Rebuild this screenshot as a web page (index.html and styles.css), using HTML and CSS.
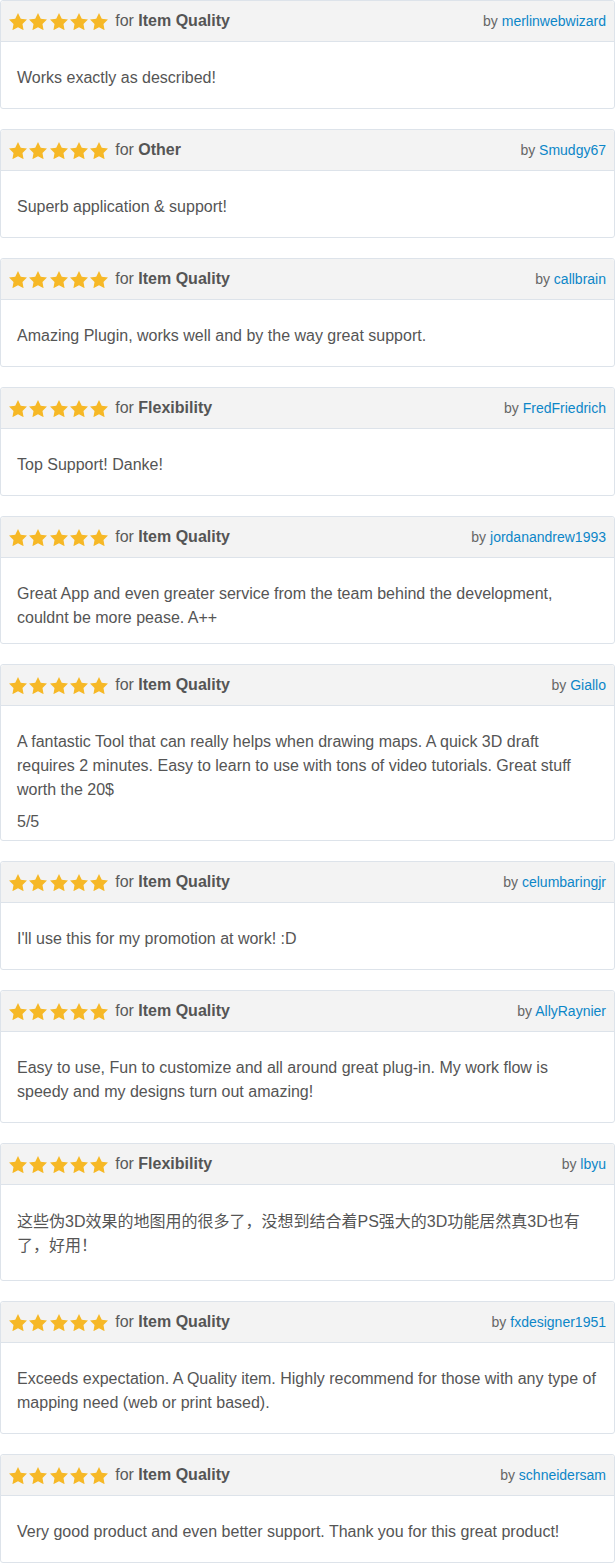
FILE: index.html
```html
<!DOCTYPE html>
<html lang="en">
<head>
<meta charset="utf-8">
<title>Reviews</title>
<link rel="stylesheet" href="styles.css">
</head>
<body>
<svg width="0" height="0" class="defs" aria-hidden="true">
  <defs>
    <symbol id="star" viewBox="1.6 1.6 20.8 19.9">
      <path d="M12 1.6l3.2 6.6 7.2 1-5.2 5.1 1.25 7.2L12 18.1l-6.45 3.4 1.25-7.2L1.6 9.2l7.2-1z"/>
    </symbol>
  </defs>
</svg>

<div class="reviews">

  <div class="review">
    <div class="review-head">
      <div class="rating">
        <span class="stars"><svg class="star"><use href="#star"/></svg><svg class="star"><use href="#star"/></svg><svg class="star"><use href="#star"/></svg><svg class="star"><use href="#star"/></svg><svg class="star"><use href="#star"/></svg></span>
        <span class="for">for <b>Item Quality</b></span>
      </div>
      <div class="author">by <a href="#">merlinwebwizard</a></div>
    </div>
    <div class="review-body"><p>Works exactly as described!</p></div>
  </div>

  <div class="review">
    <div class="review-head">
      <div class="rating">
        <span class="stars"><svg class="star"><use href="#star"/></svg><svg class="star"><use href="#star"/></svg><svg class="star"><use href="#star"/></svg><svg class="star"><use href="#star"/></svg><svg class="star"><use href="#star"/></svg></span>
        <span class="for">for <b>Other</b></span>
      </div>
      <div class="author">by <a href="#">Smudgy67</a></div>
    </div>
    <div class="review-body"><p>Superb application &amp; support!</p></div>
  </div>

  <div class="review">
    <div class="review-head">
      <div class="rating">
        <span class="stars"><svg class="star"><use href="#star"/></svg><svg class="star"><use href="#star"/></svg><svg class="star"><use href="#star"/></svg><svg class="star"><use href="#star"/></svg><svg class="star"><use href="#star"/></svg></span>
        <span class="for">for <b>Item Quality</b></span>
      </div>
      <div class="author">by <a href="#">callbrain</a></div>
    </div>
    <div class="review-body"><p>Amazing Plugin, works well and by the way great support.</p></div>
  </div>

  <div class="review">
    <div class="review-head">
      <div class="rating">
        <span class="stars"><svg class="star"><use href="#star"/></svg><svg class="star"><use href="#star"/></svg><svg class="star"><use href="#star"/></svg><svg class="star"><use href="#star"/></svg><svg class="star"><use href="#star"/></svg></span>
        <span class="for">for <b>Flexibility</b></span>
      </div>
      <div class="author">by <a href="#">FredFriedrich</a></div>
    </div>
    <div class="review-body"><p>Top Support! Danke!</p></div>
  </div>

  <div class="review">
    <div class="review-head">
      <div class="rating">
        <span class="stars"><svg class="star"><use href="#star"/></svg><svg class="star"><use href="#star"/></svg><svg class="star"><use href="#star"/></svg><svg class="star"><use href="#star"/></svg><svg class="star"><use href="#star"/></svg></span>
        <span class="for">for <b>Item Quality</b></span>
      </div>
      <div class="author">by <a href="#">jordanandrew1993</a></div>
    </div>
    <div class="review-body review-body--short"><p>Great App and even greater service from the team behind the development, couldnt be more pease. A++</p></div>
  </div>

  <div class="review">
    <div class="review-head">
      <div class="rating">
        <span class="stars"><svg class="star"><use href="#star"/></svg><svg class="star"><use href="#star"/></svg><svg class="star"><use href="#star"/></svg><svg class="star"><use href="#star"/></svg><svg class="star"><use href="#star"/></svg></span>
        <span class="for">for <b>Item Quality</b></span>
      </div>
      <div class="author">by <a href="#">Giallo</a></div>
    </div>
    <div class="review-body review-body--tight">
      <p>A fantastic Tool that can really helps when drawing maps. A quick 3D draft requires 2 minutes. Easy to learn to use with tons of video tutorials. Great stuff worth the 20$</p>
      <p>5/5</p>
    </div>
  </div>

  <div class="review">
    <div class="review-head">
      <div class="rating">
        <span class="stars"><svg class="star"><use href="#star"/></svg><svg class="star"><use href="#star"/></svg><svg class="star"><use href="#star"/></svg><svg class="star"><use href="#star"/></svg><svg class="star"><use href="#star"/></svg></span>
        <span class="for">for <b>Item Quality</b></span>
      </div>
      <div class="author">by <a href="#">celumbaringjr</a></div>
    </div>
    <div class="review-body"><p>I'll use this for my promotion at work! :D</p></div>
  </div>

  <div class="review">
    <div class="review-head">
      <div class="rating">
        <span class="stars"><svg class="star"><use href="#star"/></svg><svg class="star"><use href="#star"/></svg><svg class="star"><use href="#star"/></svg><svg class="star"><use href="#star"/></svg><svg class="star"><use href="#star"/></svg></span>
        <span class="for">for <b>Item Quality</b></span>
      </div>
      <div class="author">by <a href="#">AllyRaynier</a></div>
    </div>
    <div class="review-body"><p>Easy to use, Fun to customize and all around great plug-in. My work flow is speedy and my designs turn out amazing!</p></div>
  </div>

  <div class="review">
    <div class="review-head">
      <div class="rating">
        <span class="stars"><svg class="star"><use href="#star"/></svg><svg class="star"><use href="#star"/></svg><svg class="star"><use href="#star"/></svg><svg class="star"><use href="#star"/></svg><svg class="star"><use href="#star"/></svg></span>
        <span class="for">for <b>Flexibility</b></span>
      </div>
      <div class="author">by <a href="#">lbyu</a></div>
    </div>
    <div class="review-body review-body--cjk"><p>这些伪3D效果的地图用的很多了，没想到结合着PS强大的3D功能居然真3D也有了，好用！</p></div>
  </div>

  <div class="review">
    <div class="review-head">
      <div class="rating">
        <span class="stars"><svg class="star"><use href="#star"/></svg><svg class="star"><use href="#star"/></svg><svg class="star"><use href="#star"/></svg><svg class="star"><use href="#star"/></svg><svg class="star"><use href="#star"/></svg></span>
        <span class="for">for <b>Item Quality</b></span>
      </div>
      <div class="author">by <a href="#">fxdesigner1951</a></div>
    </div>
    <div class="review-body"><p>Exceeds expectation. A Quality item. Highly recommend for those with any type of mapping need (web or print based).</p></div>
  </div>

  <div class="review">
    <div class="review-head">
      <div class="rating">
        <span class="stars"><svg class="star"><use href="#star"/></svg><svg class="star"><use href="#star"/></svg><svg class="star"><use href="#star"/></svg><svg class="star"><use href="#star"/></svg><svg class="star"><use href="#star"/></svg></span>
        <span class="for">for <b>Item Quality</b></span>
      </div>
      <div class="author">by <a href="#">schneidersam</a></div>
    </div>
    <div class="review-body"><p>Very good product and even better support. Thank you for this great product!</p></div>
  </div>

</div>
</body>
</html>
```

FILE: styles.css
```css
html, body {
  margin: 0;
  padding: 0;
  background: #ffffff;
}

body {
  font-family: "Liberation Sans", Arial, "Noto Sans CJK SC", sans-serif;
  color: #555555;
  font-size: 16px;
}

.defs {
  position: absolute;
  width: 0;
  height: 0;
  overflow: hidden;
}

.reviews {
  display: flex;
  flex-direction: column;
  gap: 20px;
}

.review {
  border: 1px solid #dde3ea;
  border-radius: 3px;
  background: #ffffff;
}

.review-head {
  display: flex;
  justify-content: space-between;
  align-items: center;
  height: 40px;
  padding: 0 8px;
  background: #f3f3f3;
  border-bottom: 1px solid #dde3ea;
  border-radius: 3px 3px 0 0;
}

.rating {
  display: flex;
  align-items: center;
  gap: 7px;
}

.stars {
  display: flex;
  align-items: center;
  gap: 2.3px;
  padding-top: 1px;
}

.star {
  width: 18px;
  height: 17.2px;
  fill: #f6b826;
  display: block;
}

.for {
  font-size: 16px;
  color: #5a5a5a;
  line-height: 20px;
}

.for b {
  font-weight: bold;
  color: #555555;
}

.author {
  font-size: 14px;
  color: #666666;
  line-height: 20px;
}

.author a {
  color: #0c86c8;
  text-decoration: none;
}

.review-body {
  padding: 24px 16px 18px;
}

.review-body p {
  margin: 0;
  font-size: 16px;
  line-height: 24px;
  color: #555555;
}

.review-body p + p {
  margin-top: 8px;
}

.review-body--short {
  padding-bottom: 13px;
}

.review-body--tight {
  padding-bottom: 6px;
}

.review-body--cjk {
  padding-top: 25px;
  padding-bottom: 22px;
}
```
